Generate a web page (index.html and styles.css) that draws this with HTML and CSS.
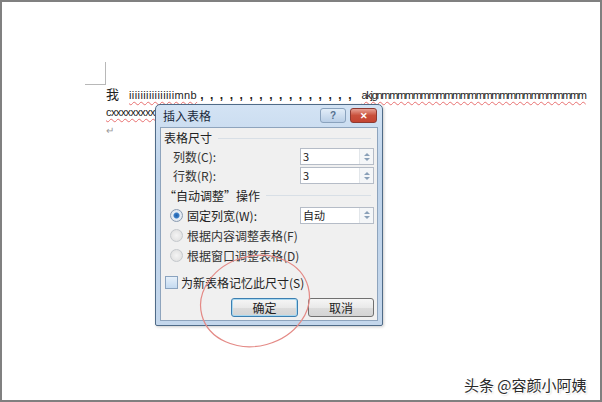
FILE: index.html
```
<!DOCTYPE html>
<html>
<head>
<meta charset="utf-8">
<link rel="stylesheet" href="styles.css">
</head>
<body>
<div class="screen">
  <div class="doc">
    <div class="corner"></div>
    <p class="line"><span class="wo">我</span><span class="ii wavy">iiiiiiiiiiiiiiiimnb</span><span class="commas">, , , , , , , , , , , , , , , ,</span><span class="mm wavy">akjgnmmmmmmmmmmmmmmmmmmmmmmmmmm</span></p>
    <p class="line"><span class="xx wavy">cxxxxxxxxxxx</span></p>
    <p class="line"><span class="ret">↵</span></p>
  </div>

  <div class="dialog">
    <div class="titlebar">
      <span class="title">插入表格</span>
      <div class="tbtns">
        <span class="tb help">?</span>
        <span class="tb close">✕</span>
      </div>
    </div>
    <div class="client">
      <div class="group"><span>表格尺寸</span><i class="rule"></i></div>
      <div class="row"><span class="lbl">列数(<u>C</u>):</span>
        <div class="spin"><span class="val">3</span><span class="arrows"><b class="up"></b><b class="dn"></b></span></div></div>
      <div class="row"><span class="lbl">行数(<u>R</u>):</span>
        <div class="spin"><span class="val">3</span><span class="arrows"><b class="up"></b><b class="dn"></b></span></div></div>
      <div class="group g2"><span>“自动调整”操作</span><i class="rule"></i></div>
      <div class="opt"><span class="radio on"></span><span>固定列宽(<u>W</u>):</span>
        <div class="spin"><span class="val">自动</span><span class="arrows"><b class="up"></b><b class="dn"></b></span></div></div>
      <div class="opt"><span class="radio"></span><span class="dim">根据内容调整表格(<u>F</u>)</span></div>
      <div class="opt"><span class="radio"></span><span class="dim">根据窗口调整表格(<u>D</u>)</span></div>
      <div class="chk"><span class="box"></span><span>为新表格记忆此尺寸(<u>S</u>)</span></div>
      <div class="btns"><span class="btn def">确定</span><span class="btn">取消</span></div>
    </div>
  </div>

  <svg class="mark" width="602" height="402" viewBox="0 0 602 402">
    <ellipse cx="255" cy="301" rx="55" ry="45" transform="rotate(-15 255 301)" fill="none" stroke="#e48a86" stroke-width="1.2"/>
  </svg>

  <div class="watermark">头条 @容颜小阿姨</div>
</div>
</body>
</html>
```
FILE: styles.css
```
html, body { margin: 0; padding: 0; background: #fff; }
.screen {
  width: 602px; height: 402px; box-sizing: border-box;
  border: 2px solid #808080; position: relative; overflow: hidden; background: #fff;
  font-family: "Liberation Sans", "Noto Sans CJK SC", sans-serif;
}
.doc { padding: 60px 0 0 83px; }
.corner { width: 20px; height: 22px; border-right: 1px solid #b8b8b8; border-bottom: 1px solid #b8b8b8; }
.line { margin: 0 0 0 21px; height: 18px; line-height: 18px; white-space: nowrap; font-size: 12px; color: #222; }
.wo { font-family: "Noto Sans CJK SC", sans-serif; font-size: 13px; margin-right: 10px; }
.wavy { text-decoration: underline wavy #e87070; text-decoration-thickness: 1px; text-underline-offset: 2px; }
.ii { letter-spacing: 0.4px; font-size: 11px; }
.commas { word-spacing: 3.2px; margin: 0 10px 0 3px; font-weight: bold; }
.mm { font-size: 11px; letter-spacing: -1.3px; }
.xx { font-size: 11px; letter-spacing: -0.6px; }
.ret { color: #999; font-size: 10px; }

.dialog {
  position: absolute; left: 153px; top: 102px; width: 228px; height: 222px; box-sizing: border-box;
  border: 1px solid #4f6b88; border-radius: 5px 5px 2px 2px;
  background: linear-gradient(#d3e3f4, #bed3ea 30%, #c4d7ec);
  display: flex; flex-direction: column; padding: 0 4px 4px;
  box-shadow: 1px 1px 3px rgba(0,0,0,0.2);
}
.titlebar { height: 22px; display: flex; align-items: flex-start; }
.title { font-family: "Noto Sans CJK SC", sans-serif; font-size: 12px; color: #1b2a3c; margin: 4px 0 0 3px; line-height: 14px; }
.tbtns { margin: 3px 1px 0 auto; display: flex; gap: 4px; }
.tb { height: 13px; border-radius: 3px; display: flex; align-items: center; justify-content: center; font-size: 10px; font-weight: bold; }
.help { width: 24px; border: 1px solid #8aa2bd; background: linear-gradient(#e2edf8, #b9cee6); color: #55708f; }
.close { width: 25px; border: 1px solid #8e3a32; background: linear-gradient(#e8a295, #c9503c 50%, #c44432); color: #fff; font-size: 9px; }

.client {
  flex: 1; background: #f0f0f0; border: 1px solid #8ea4bd; padding: 0 3px;
  display: flex; flex-direction: column;
  font-family: "Noto Sans CJK SC", sans-serif; font-size: 12px; color: #222;
}
.client u { text-decoration: none; }
.group { height: 19px; display: flex; align-items: center; }
.g2 { height: 20px; }
.rule { flex: 1; border-top: 1px solid #d8dfe6; margin: 1px 3px 0 6px; }
.row { height: 19px; display: flex; align-items: center; padding-left: 9px; }
.lbl { color: #333; }
.spin {
  margin-left: auto; width: 74px; height: 17px; box-sizing: border-box;
  border: 1px solid #b5bcc7; background: #fff; display: flex;
}
.val { flex: 1; padding-left: 2px; line-height: 15px; font-size: 11px; color: #222; }
.arrows { width: 13px; display: flex; flex-direction: column; align-items: center; justify-content: center; gap: 2px; background: #f4f6f8; border-left: 1px solid #e2e6ea; }
.up, .dn { width: 0; height: 0; border-left: 3px solid transparent; border-right: 3px solid transparent; }
.up { border-bottom: 3px solid #8aa0b8; }
.dn { border-top: 3px solid #8aa0b8; }
.opt { height: 20px; display: flex; align-items: center; gap: 4px; padding-left: 6px; }
.radio { width: 11px; height: 11px; border-radius: 50%; border: 1px solid #c4c8cc; background: radial-gradient(#f4f4f4, #dcdcdc); box-sizing: content-box; }
.radio.on { border-color: #8a9bb0; background: radial-gradient(circle, #1f5fa8 0, #3b7ec8 2.5px, #e8eef5 3.5px, #d5dde6 100%); }
.dim { color: #333; }
.chk { height: 20px; display: flex; align-items: center; gap: 3px; margin-top: 7px; padding-left: 1px; }
.box { width: 11px; height: 11px; border: 1px solid #8aa3bf; background: linear-gradient(#e6f0fa, #c4daf0); }
.btns { display: flex; justify-content: flex-end; gap: 10px; margin-top: 6px; }
.btn {
  width: 66px; height: 19px; box-sizing: border-box; border: 1px solid #707070; border-radius: 3px;
  background: linear-gradient(#f6f6f6, #e9e9e9 50%, #dcdcdc 51%, #d4d4d4);
  display: flex; align-items: center; justify-content: center; font-size: 12px; color: #222;
}
.btn.def { width: 67px; border-color: #3c7fb1; box-shadow: inset 0 0 0 1px #a8d8f0; }

.mark { position: absolute; left: -2px; top: -2px; pointer-events: none; }
.watermark {
  position: absolute; left: 462px; top: 372px;
  font-family: "Noto Sans CJK SC", sans-serif; font-size: 15px; color: #2a2a2a;
  text-shadow: 1px 1px 0 #fff, -1px -1px 0 #fff, 1px -1px 0 #fff, -1px 1px 0 #fff, 1px 1px 2px rgba(0,0,0,0.3);
}
```
